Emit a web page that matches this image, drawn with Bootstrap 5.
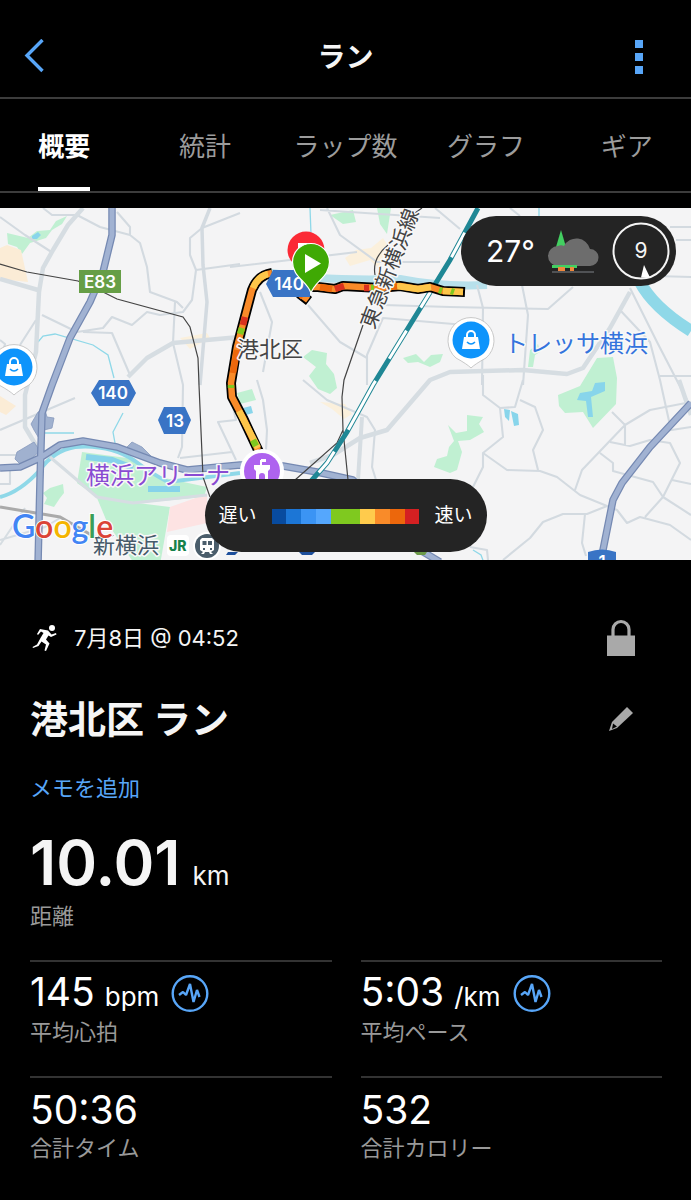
<!DOCTYPE html>
<html lang="ja">
<head>
<meta charset="utf-8">
<meta name="viewport" content="width=device-width, initial-scale=1">
<title>ラン</title>
<link href="https://cdn.jsdelivr.net/npm/bootstrap@5.3.0/dist/css/bootstrap.min.css" rel="stylesheet">
<style>
  body { background: #000; color: #f5f5f5; font-family: Inter, "Noto Sans CJK JP", sans-serif; overflow-x: hidden; }
  .topbar { height: 99px; padding: 16px 36px 0 24px; border-bottom: 2px solid #3c3c3c; }
  .topbar h1 { font-size: 28px; line-height: 40px; }
  .topbar button { width: 32px; height: 44px; }
  .topbar .more { width: 20px; }
  .tabbar { height: 94px; border-bottom: 2px solid #3c3c3c; overflow: hidden; }
  .tabbar .nav { margin: 0 -6px; }
  .tabbar .nav-link { color: #9c9c9c; font-size: 26px; line-height: 36px; height: 92px; padding: 30px 0 0; }
  .tabbar .nav-link span { display: inline-block; height: 62px; white-space: nowrap; }
  .tabbar .nav-link.active { color: #fff; font-weight: 700; }
  .tabbar .nav-link.active span { border-bottom: 4px solid #fff; }
  .mapbox { margin-top: 15px; height: 352px; background: #f4f4f5; }
  .pill { background: #242424; color: #fff; border-radius: 40px; }
  .weather { top: 8px; right: 15px; height: 70px; width: 215px; padding: 0 6px 0 25px; }
  .weather .temp { font-size: 30px; line-height: 40px; }
  .legend-pill { bottom: 8px; height: 73px; width: 282px; padding-top: 2px; gap: 15px; font-size: 19px; }
  .scale { width: 148px; height: 15px; }
  .c1{background:#084b9f}.c2{background:#1c76d6}.c3{background:#3b94f4}.c4{background:#55a7fd}.c5{background:#7fc91f}
  .c6{background:#ffcb4c}.c7{background:#f98b29}.c8{background:#ec670c}.c9{background:#d42022}
  .details { padding: 58px 29px 32px 30px; }
  .when { font-size: 22px; line-height: 40px; }
  .side { width: 82px; height: 40px; }
  .title-row { margin-top: 35px; }
  .name { font-size: 38px; line-height: 52px; font-weight: 700; }
  .blue { color: #58a6f8; font-size: 22px; line-height: 32px; margin-top: 27px; }
  .big { font-size: 62px; line-height: 48px; font-weight: 600; margin-top: 35px; }
  .unit { font-size: 26px; font-weight: 400; margin-left: 10px; }
  .big .unit { margin-left: 12px; }
  .caption-text { color: #999; font-size: 22px; line-height: 32px; }
  .stats { display: grid; grid-template-columns: 1fr 1fr; column-gap: 29px; margin-top: 28px; }
  .stat { border-top: 2px solid #333; height: 116px; padding-top: 10px; }
  .val { font-size: 39px; line-height: 48px; color: #fff; }
  .val-row { height: 44px; }
</style>
</head>
<body>
<header class="topbar d-flex align-items-center justify-content-between">
  <button type="button" class="btn p-0 border-0 d-flex align-items-center" aria-label="戻る">
    <svg width="22" height="36" viewBox="0 0 22 36" fill="none" stroke="#58a6f8" stroke-width="3.4"><path d="M18.5 1 3 16.500l15.500 15.500"/></svg>
  </button>
  <h1 class="m-0 fw-bold">ラン</h1>
  <button type="button" class="btn p-0 border-0 more d-flex align-items-center justify-content-start" aria-label="メニュー">
    <svg width="8" height="36" viewBox="0 0 8 36" fill="#58a6f8"><path d="M0 1h8v8H0zM0 14h8v8H0zM0 27h8v8H0z"/></svg>
  </button>
</header>
<div class="tabbar">
  <nav class="nav nav-justified flex-nowrap">
    <a class="nav-link active" href="#" aria-current="page"><span>概要</span></a>
    <a class="nav-link" href="#"><span>統計</span></a>
    <a class="nav-link" href="#"><span>ラップ数</span></a>
    <a class="nav-link" href="#"><span>グラフ</span></a>
    <a class="nav-link" href="#"><span>ギア</span></a>
  </nav>
</div>

<main>
<section class="mapbox position-relative overflow-hidden">
<svg class="d-block w-100 h-100" viewBox="0 208 691 352" preserveAspectRatio="xMidYMid slice" font-family="Inter, 'Noto Sans CJK JP', sans-serif">
  <defs>
    <g id="bag"><path d="M-15 18A23 23 0 1 1 15 18Q4 24 0 28Q-4 24-15 18z" fill="#fff" stroke="#bbb" stroke-width=".8"/><circle r="18.500" fill="#0e94fb"/><path d="M-7-3H7L9 9H-9z" fill="#fff"/><path d="M-4-2V-5a4 4 0 0 1 8 0V-2" fill="none" stroke="#fff" stroke-width="2"/><path d="M-4 2q4 4 8 0" fill="none" stroke="#0e94fb" stroke-width="1.600"/></g>
  </defs>
  <!-- parks and built-up areas -->
  <g fill="#c0f0d2">
    <path d="M7 233 28 238 37 231 50 230 56 221 67 216 62 224 52 230 46 238 30 243 22 254 17 247 8 244z"/>
    <path d="M330 215 353 210 356 222 343 224zM377 208H391L387 234 380 224z"/>
    <path d="M303 357 312 350 327 353 326 364 334 374 337 388 330 394 318 389 309 376 316 367z"/>
    <path d="M403 358 416 354 424 362 431 355 443 354 440 362 430 367 418 362 408 363z"/>
    <path d="M448 425 456 433 467 431 467 415 483 417 479 424 484 432 470 440 458 441 462 452 457 470 450 473 434 467 437 459 447 456 449 447 454 441z"/>
    <path d="M558 395 580 386 597 358 613 357 617 378 616 404 593 428 583 412 565 413 559 406z"/>
    <path d="M82 452 127 458 160 477 207 487 204 497 140 503 97 497 77 483z"/>
    <path d="M97 498 170 507 160 565H135L107 522z"/>
    <path d="M50 488 63 484 64 493 60 498 54 507 44 504 47 498 43 493z"/>
    <path d="M237 393 252 389 256 400 240 404zM530 350l8-6 2 8-5 3-2 12h-5z"/>
  </g>
  <path d="M7 245 21 250 28 282 0 279V248zM0 396l16 10-10 9-6-3z" fill="#fbecd6"/>
  <path d="M345 258 356 250 371 248 383 238 388 246 378 268 370 260 350 266zM180 338 207 333 210 338 190 349zM320 402l25 2 7 10-8 5-12-10z" fill="#fbf0dc"/>
  <path d="M170 507 207 494V523L167 532z" fill="#fde3e3"/>
  <g fill="#88d5eb"><path d="M577 400 580 393 592 391 595 383 605 382 605 391 591 397 593 417 588 417 586 401zM32 236l6-4 3 3-4 4h-5zM504 409l6 1-1 11-4-4zM511 411l7 3 1 11-5 1zM243 408l8-2 2 7-7 2z"/></g>
  <!-- water -->
  <g fill="none" stroke="#8fd8e8">
    <path d="M0 497Q20 492 40 470Q53 451 75 447Q110 444 135 461Q152 474 168 482L240 473" stroke-width="4"/>
    <path d="M86 457 112 460 133 468M148 489 180 489" stroke-width="6" stroke="#86d3ea"/>
    <path d="M38 342 43 336 55 334 93 345 108 355 114 378M123 413 113 432 115 443M40 433H74M310 208 311 234M539 208v12M473 550l8 5 3 8" stroke-width="1.300"/>
    <path d="M241 350Q244 275 272 273Q320 281 400 279Q440 287 487 285" stroke="#b7e0eb" stroke-width="8"/>
    <path d="M640 282Q653 307 691 331" stroke-width="12"/>
  </g>
  <!-- streets -->
  <g fill="none" stroke="#d3dae0" stroke-width="2.100" stroke-linejoin="round">
    <path d="M0 217 25 235 53 253M43 208 52 215 77 215 100 227 130 235 140 243 147 267 150 292 177 302 183 308M117 212 130 227V235M240 213 202 228 190 238 190 255 196 270 240 264M196 270 192 300 183 312 160 315 147 312 132 325 112 317 103 328 77 332 42 315M83 332 112 333 130 375M175 302 173 343 183 385 182 447 178 458"/>
    <path d="M210 208 202 228 203 265 207 302 200 385" stroke-width="3.500"/>
    <path d="M0 430 75 398M0 455 28 455M10 470V484H0M233 340Q228 390 236 420L218 422 236 460M180 458 232 452M36 320 20 345M0 340 5 344 3 352"/>
    <path d="M230 267 290 260 357 252M327 208 340 235 377 262 440 262M260 292 272 322 263 372M308 305 340 342 367 358M383 305 450 307 548 309 573 287M367 385 367 355 383 318 430 322 465 325M257 380 263 400 267 430 266 450M303 380 327 400 367 417 375 430 372 467 376 480M320 210 440 218M435 208 460 229M510 208 520 216"/>
    <path d="M477 285 483 308 482 385M522 285 528 315 523 385M691 227H670M691 240H676M630 288 657 342 687 400M620 310 650 342 660 380 671 430M691 277 655 276M691 376 660 376"/>
    <path d="M483 375V395L500 408 503 437 483 453 483 467 473 487M523 380 515 407 500 408M520 400 535 407 543 430 533 450 538 470M483 453 507 470 540 471 557 477 580 495 607 506 617 510 627 523 640 517 670 525 691 540M503 560 530 538 543 522 563 514 587 514 607 506M585 514 582 543 586 556M575 490 582 470 625 425 650 410 691 402M612 412 625 425V445M610 442 630 446 650 440 670 443 680 463 663 497 645 517M600 453 613 463V471L653 482 663 497 691 515M665 431 691 427M672 480 691 484M470 547 487 550 488 560"/>
  </g>
  <g fill="none" stroke="#d6dde2" stroke-linejoin="round">
    <path d="M83 208 68 225 53 250 43 268 39 292 36 352 25 395 25 427 37 447M0 279 38 290M240 337 173 343 147 358 128 377M630 292 610 328 583 368 567 374 523 370 450 372 430 380 387 430 360 438 333 455 310 463M679 380 691 415" stroke-width="4.500"/>
    <path d="M50 457 97 497 133 503 207 495" stroke-width="3"/><path d="M362 417 358 480"  stroke-width="4"/>
    <path d="M25 508 0 545M60 518 45 527 0 540" stroke-width="2"/>
  </g>
  <path d="M0 507 60 517 100 540" fill="none" stroke="#aaa" stroke-width="3"/>
  <!-- motorways -->
  <g fill="#a0b1cf" stroke="#8799bd" stroke-width=".8"><path d="M38 412 45 410 47 417 54 418 52 428 44 430 40 440 34 430 31 424zM15 459 17 452 34 442 40 451 30 460 20 464zM126 448 132 442 142 447 155 460z"/></g>
  <g fill="none" stroke-linejoin="round">
    <g stroke="#7589b2" stroke-width="7.500"><path d="M112 208V235L103 272 90 302 70 338 52 385 42 413 40 480 38 565M0 468 20 467 40 458 60 445 83 441 117 447 160 463 187 470 240 465 283 466 317 472 353 480 420 550 440 562M691 403 650 447 622 483 613 500 602 555"/></g>
    <g stroke="#a1b2d2" stroke-width="5"><path d="M112 208V235L103 272 90 302 70 338 52 385 42 413 40 480 38 565M0 468 20 467 40 458 60 445 83 441 117 447 160 463 187 470 240 465 283 466 317 472 353 480 420 550 440 562M691 403 650 447 622 483 613 500 602 555"/></g>
  </g>
  <!-- railways -->
  <g fill="none" stroke="#444" stroke-width="1.200">
    <path d="M0 264 27 272 78 281 103 292 117 299 183 317 190 327 198 358 199 385 203 477 210 497M363 325 344 380 342 397 343 430 337 443 295 480M343 430 348 480M375 275Q372 258 388 245M415 213 422 208"/>
  </g>
  <path d="M478 208 450 260 373 385 347 432 327 463 305 488" fill="none" stroke="#1f8795" stroke-width="5"/>
  <path d="M478 208 450 260 373 385 347 432 327 463 305 488" fill="none" stroke="#fff" stroke-width="3" stroke-dasharray="0 28 28 32 27 27 33 26 56 26 26 99"/>
  <!-- run track -->
  <g fill="none" stroke-linejoin="round">
    <path d="M465 292 443 291 430 287 418 289 400 286 380 288 343 286 335 289 318 287 308 287 300 294 309 301M272 273Q258 275 252 290L243 324 237 347 231 383 232 397 243 418 259 452" stroke="#000" stroke-width="10"/>
    <g stroke="#f98b29" stroke-width="6.500">
      <path d="M463 292 443 291 430 287 418 289 400 286 380 288 343 286 335 289 318 287 308 287 300 294 308 300M272 273Q258 275 252 290L243 324 237 347 231 383 232 397 243 418 258 450"/>
      <path d="M431 287 418 289 397 286M463 292 443 291M268 274Q258 276 253 288M239 411 258 448" stroke="#fdc64a"/>
      <path d="M344 286 335 289M369 288 364 288M245 317 243 325" stroke="#d9311f"/>
      <path d="M397 286 388 287M320 287 332 289M237 350 233 373M303 297 300 294" stroke="#ec670c"/>
      <path d="M374 288 371 288M442 291 439 290M454 292 451 291M242 328 240 334M253 440 256 446M231 385 231 388" stroke="#7fc91f"/>
    </g>
  </g>
  <!-- road shields -->
  <g fill="#fff" font-weight="600" font-size="17" text-anchor="middle">
    <path d="M79 270h42v23H79z" fill="#669e46"/><text x="100" y="288">E83</text>
    <g fill="#3974c5"><path d="M99 380h30l7 13-7 13H99l-8-13zM164 407h21l6 13-6 14H164l-6-14zM273 270h37v27H273l-7-13z"/></g>
    <text x="113" y="399">140</text><text x="175" y="427">13</text><text x="289" y="290">140</text>
    <path d="M588 552q14-5 28 0v12h-28z" fill="#3974c5"/><text x="602" y="568">1</text>
  </g>
  <!-- start and finish pins -->
  <circle cx="306" cy="250" r="18.500" fill="#fb2a35"/><path d="M298 243h14v8h-14z" fill="#fff"/>
  <path d="M311 293C307 281 292.500 277 292.500 262A18.500 18.500 0 0 1 329.500 262C329.500 277 315 281 311 293z" fill="#3fa904" stroke="#fff" stroke-width="1.200"/>
  <path d="M305 254v19l16-9.500z" fill="#fff"/>
  <!-- places -->
  <use href="#bag" x="14" y="367"/><use href="#bag" x="471" y="340"/>
  <circle cx="262" cy="471" r="22" fill="#fff"/><circle cx="262" cy="471" r="18" fill="#ae63ef"/>
  <path d="M254 465h6v-5h1v-1h5v3h-4v3h8v4l-2 2v10h-3v-5a3 3 0 0 0-6 0v5h-3v-10l-2-2z" fill="#fff"/>
  <g paint-order="stroke" stroke="#f8f8f8" stroke-width="3" stroke-linejoin="round">
    <text x="237" y="357" font-size="22" fill="#444">港北区</text>
    <text x="504" y="352" font-size="24" fill="#3474dd">トレッサ横浜</text>
    <text x="86" y="484" font-size="24" fill="#8a4bd2">横浜アリーナ</text>
    <text x="93" y="553" font-size="22" fill="#465a69">新横浜</text>
    <text transform="translate(374 330) rotate(-69)" font-size="21" fill="#444">東急新横浜線</text>
  </g>
  <rect x="167" y="535" width="22" height="21" rx="4" fill="#fff"/>
  <text x="169" y="551" font-size="14" font-weight="800" fill="#17824b">JR</text>
  <circle cx="207" cy="546" r="14" fill="#fff"/><circle cx="207" cy="546" r="12" fill="#4a5d6b"/>
  <path d="M202 538h10l2 2v10l-3 2 2 2h-3l-1-2h-4l-1 2h-3l2-2-3-2v-10z" fill="#fff"/><path d="M202.500 541h4v4h-4zm5.500 0h4v4h-4zM203 548h2v2h-2zm7 0h2v2h-2z" fill="#4a5d6b"/>
  <path d="M228 552h10l-3 3h-9zM298 551h18l-4 4h-10z" fill="#1d4f9c"/><path d="M411 549h18l-4 6h-8z" fill="#6c9a48"/>
  <text x="12" y="538" font-family="Lato, sans-serif" font-size="32" font-weight="600" paint-order="stroke" stroke="#fff" stroke-width="2"><tspan fill="#4285f4">G</tspan><tspan fill="#db4437">o</tspan><tspan fill="#f4b400">o</tspan><tspan fill="#4285f4">g</tspan><tspan fill="#3a9e58">l</tspan><tspan fill="#db4437">e</tspan></text>
</svg>

  <div class="pill weather position-absolute d-flex align-items-center justify-content-between">
    <span class="temp">27°</span>
    <svg width="54" height="46" viewBox="0 0 52 46"><path d="M14 2 19 19H9z" fill="#43cf61"/><path d="M11 18C13 17 15 17 17 18A14 14 0 0 1 43 21A8.500 8.500 0 0 1 43 38H11A10 10 0 0 1 11 18z" fill="#6d6d6d"/><path d="M5 37h25v3H5z" fill="#43cf61"/><path d="M11 39h7v4h-7zM23 39h4v4h-4z" fill="#f0883c"/><path d="M5 43h42v2H5z" fill="#505255"/></svg>
    <svg width="58" height="58" viewBox="0 0 58 58"><circle cx="29" cy="29" r="27.500" fill="none" stroke="#f5f5f5" stroke-width="2"/><text x="29" y="36" font-size="21" fill="#f5f5f5" text-anchor="middle">9</text><path d="M32 43 38 55.500H29z" fill="#fff"/></svg>
  </div>
  <div class="pill legend-pill position-absolute start-50 translate-middle-x d-flex align-items-center justify-content-center">
    <span>遅い</span>
    <div class="scale d-flex"><i class="c1 flex-fill"></i><i class="c2 flex-fill"></i><i class="c3 flex-fill"></i><i class="c4 flex-fill"></i><i class="c5 flex-fill"></i><i class="c5 flex-fill"></i><i class="c6 flex-fill"></i><i class="c7 flex-fill"></i><i class="c8 flex-fill"></i><i class="c9 flex-fill"></i></div>
    <span>速い</span>
  </div>
</section>

<section class="details">
  <div class="d-flex justify-content-between align-items-center">
    <div class="when d-flex align-items-center gap-3">
      <svg width="28" height="28" viewBox="0 0 28 28" fill="#fff"><circle cx="22" cy="4" r="3"/><path d="M10 5 18 6.500 21.500 10.500 26 9 26.500 10.500 21 13 18.500 11.500 16 15.500 19.500 19.500 16 27 14.500 26.500 16 20.500 11.500 17.500 8.500 22 3 24 2.500 23 7 20.500 10.500 14 13.500 9 11 7.500 8 11 7 10z"/></svg>
      <span>7月8日 @ 04:52</span>
    </div>
    <div class="side d-flex align-items-center justify-content-center">
      <svg width="30" height="38" viewBox="0 0 30 38"><path d="M7 18V10.500a8 8 0 0 1 16 0V18" fill="none" stroke="#a9a9a9" stroke-width="3.200"/><path d="M1 16.500h28V37H1z" fill="#a9a9a9"/></svg>
    </div>
  </div>
  <div class="title-row d-flex justify-content-between align-items-center">
    <h2 class="name m-0">港北区 ラン</h2>
    <button type="button" class="btn p-0 border-0 side d-flex align-items-center justify-content-center" aria-label="編集">
      <svg width="26" height="26" viewBox="0 0 26 26"><path d="M19 1 25 7 9 22 1 25 4 16z" fill="#a9a9a9"/><path d="M5 17.500 9 20.500 4 23z" fill="#000"/></svg>
    </button>
  </div>
  <a class="blue d-table text-decoration-none" href="#">メモを追加</a>
  <div class="big"><span>10.01</span><span class="unit">km</span></div>
  <div class="caption-text">距離</div>

  <div class="stats">
    <div class="stat"><div class="val-row d-flex align-items-center gap-2"><div class="val">145<span class="unit">bpm</span></div><svg class="ms-1" width="38" height="38" viewBox="0 0 38 38" fill="none" stroke="#58a6f8" stroke-width="2.400"><circle cx="19" cy="18.500" r="17.300"/><path d="M8 20 12 17 15 20 19 9 22.500 27 26 15 28.500 22" stroke-linejoin="bevel"/></svg></div><div class="caption-text">平均心拍</div></div>
    <div class="stat"><div class="val-row d-flex align-items-center gap-2"><div class="val">5:03<span class="unit">/km</span></div><svg class="ms-1" width="38" height="38" viewBox="0 0 38 38" fill="none" stroke="#58a6f8" stroke-width="2.400"><circle cx="19" cy="18.500" r="17.300"/><path d="M8 20 12 17 15 20 19 9 22.500 27 26 15 28.500 22" stroke-linejoin="bevel"/></svg></div><div class="caption-text">平均ペース</div></div>
    <div class="stat"><div class="val-row d-flex align-items-center"><div class="val">50:36</div></div><div class="caption-text">合計タイム</div></div>
    <div class="stat"><div class="val-row d-flex align-items-center"><div class="val">532</div></div><div class="caption-text">合計カロリー</div></div>
  </div>
</section>
</main>
<script src="https://cdn.jsdelivr.net/npm/bootstrap@5.3.0/dist/js/bootstrap.bundle.min.js"></script>
</body>
</html>
